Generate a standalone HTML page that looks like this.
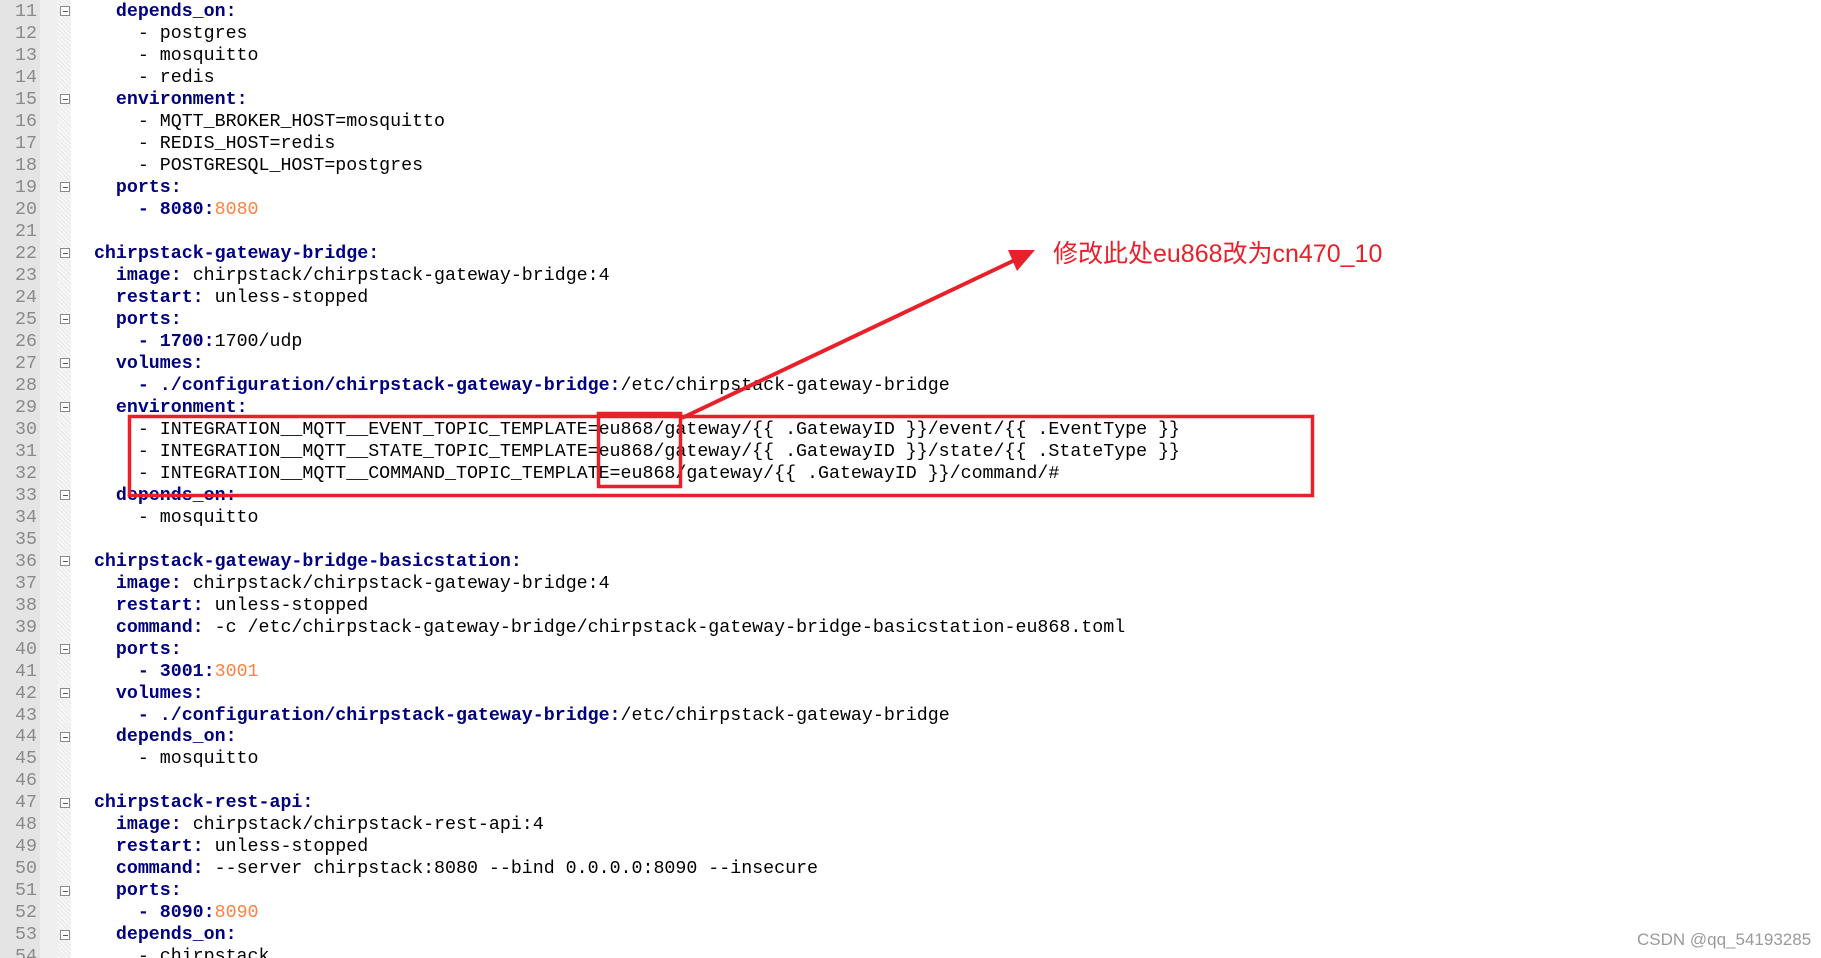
<!DOCTYPE html>
<html><head><meta charset="utf-8"><style>
html,body{margin:0;padding:0;background:#fff;width:1821px;height:958px;overflow:hidden;position:relative}
.gut{position:absolute;left:0;top:0;width:57px;height:958px;background:linear-gradient(to right,#e4e4e4 0,#e4e4e4 40px,#efefef 40px)}
.fold{position:absolute;left:57px;top:0;width:14px;height:958px;background-color:#f6f6f6;background-image:repeating-linear-gradient(45deg,#e8e8e8 0 1px,transparent 1px 3px)}
.ln,.tx{position:absolute;top:2px;font-family:"Liberation Mono",monospace;font-size:18.3px;line-height:21.98px;white-space:pre;margin:0}
.ln{left:0;width:37px;text-align:right;color:#8a8a8a}
.tx{left:72px;color:#000}
b{color:#000080}
.o{color:#ff8040}
.box{position:absolute;left:60px;width:8px;height:8px;border:1px solid #8a8a8a;background:#fff}
.box:after{content:"";position:absolute;left:2px;top:4px;width:5px;height:1px;background:#555}
.wm{position:absolute;left:1637px;top:930px;font-family:"Liberation Sans",sans-serif;font-size:17px;color:#9a9a9a}
.note{position:absolute;left:1053px;top:234px;font-family:"Liberation Sans","Noto Sans CJK SC",sans-serif;font-size:25px;color:#e8202a;white-space:nowrap}
</style></head><body>
<div class="gut"></div><div class="fold"></div>
<div class="ln">11
12
13
14
15
16
17
18
19
20
21
22
23
24
25
26
27
28
29
30
31
32
33
34
35
36
37
38
39
40
41
42
43
44
45
46
47
48
49
50
51
52
53
54</div>
<div class="tx">    <b>depends_on:</b>
      - postgres
      - mosquitto
      - redis
    <b>environment:</b>
      - MQTT_BROKER_HOST=mosquitto
      - REDIS_HOST=redis
      - POSTGRESQL_HOST=postgres
    <b>ports:</b>
      <b>- 8080:</b><span class="o">8080</span>

  <b>chirpstack-gateway-bridge:</b>
    <b>image:</b> chirpstack/chirpstack-gateway-bridge:4
    <b>restart:</b> unless-stopped
    <b>ports:</b>
      <b>- 1700:</b>1700/udp
    <b>volumes:</b>
      <b>- ./configuration/chirpstack-gateway-bridge:</b>/etc/chirpstack-gateway-bridge
    <b>environment:</b>
      - INTEGRATION__MQTT__EVENT_TOPIC_TEMPLATE=eu868/gateway/{{ .GatewayID }}/event/{{ .EventType }}
      - INTEGRATION__MQTT__STATE_TOPIC_TEMPLATE=eu868/gateway/{{ .GatewayID }}/state/{{ .StateType }}
      - INTEGRATION__MQTT__COMMAND_TOPIC_TEMPLATE=eu868/gateway/{{ .GatewayID }}/command/#
    <b>depends_on:</b>
      - mosquitto

  <b>chirpstack-gateway-bridge-basicstation:</b>
    <b>image:</b> chirpstack/chirpstack-gateway-bridge:4
    <b>restart:</b> unless-stopped
    <b>command:</b> -c /etc/chirpstack-gateway-bridge/chirpstack-gateway-bridge-basicstation-eu868.toml
    <b>ports:</b>
      <b>- 3001:</b><span class="o">3001</span>
    <b>volumes:</b>
      <b>- ./configuration/chirpstack-gateway-bridge:</b>/etc/chirpstack-gateway-bridge
    <b>depends_on:</b>
      - mosquitto

  <b>chirpstack-rest-api:</b>
    <b>image:</b> chirpstack/chirpstack-rest-api:4
    <b>restart:</b> unless-stopped
    <b>command:</b> --server chirpstack:8080 --bind 0.0.0.0:8090 --insecure
    <b>ports:</b>
      <b>- 8090:</b><span class="o">8090</span>
    <b>depends_on:</b>
      - chirpstack</div>
<div class="box" style="top:6px"></div>
<div class="box" style="top:94px"></div>
<div class="box" style="top:182px"></div>
<div class="box" style="top:248px"></div>
<div class="box" style="top:314px"></div>
<div class="box" style="top:358px"></div>
<div class="box" style="top:402px"></div>
<div class="box" style="top:490px"></div>
<div class="box" style="top:556px"></div>
<div class="box" style="top:644px"></div>
<div class="box" style="top:688px"></div>
<div class="box" style="top:732px"></div>
<div class="box" style="top:798px"></div>
<div class="box" style="top:886px"></div>
<div class="box" style="top:930px"></div>
<svg width="1821" height="958" style="position:absolute;left:0;top:0">
<rect x="129.5" y="416.5" width="1183" height="79" fill="none" stroke="#e8202a" stroke-width="3.5"/>
<rect x="598.5" y="413.5" width="82" height="73" fill="none" stroke="#e8202a" stroke-width="3.5"/>
<line x1="682" y1="418" x2="1015" y2="260" stroke="#e8202a" stroke-width="4"/>
<polygon points="1035,250 1008,250 1017,271" fill="#e8202a"/>
</svg>
<div class="note">修改此处eu868改为cn470_10</div>
<div class="wm">CSDN @qq_54193285</div>
</body></html>
